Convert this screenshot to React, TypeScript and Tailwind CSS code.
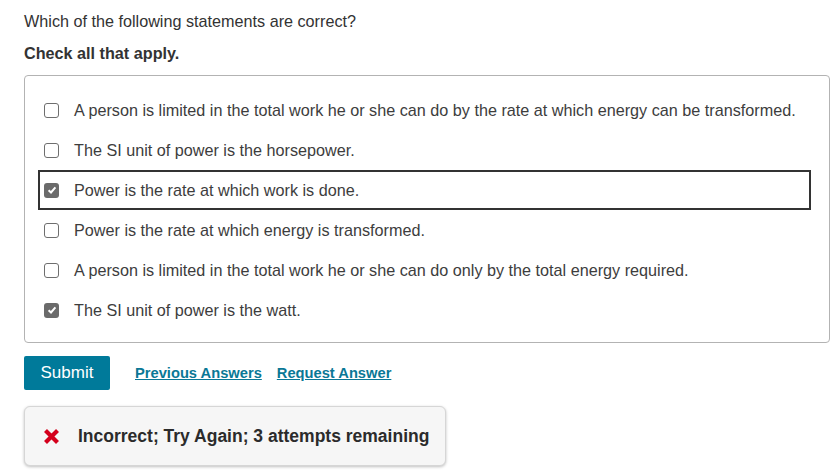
import React from "react";

const options = [
  { text: "A person is limited in the total work he or she can do by the rate at which energy can be transformed.", checked: false },
  { text: "The SI unit of power is the horsepower.", checked: false },
  { text: "Power is the rate at which work is done.", checked: true, focused: true },
  { text: "Power is the rate at which energy is transformed.", checked: false },
  { text: "A person is limited in the total work he or she can do only by the total energy required.", checked: false },
  { text: "The SI unit of power is the watt.", checked: true },
];

const Box: React.FC<{ checked: boolean }> = ({ checked }) =>
  checked ? (
    <span className="flex h-[15px] w-[15px] shrink-0 items-center justify-center rounded-[3px] bg-[#6b6b6b]">
      <svg width="10" height="10" viewBox="0 0 10 10">
        <path d="M1.6 5.2 L4 7.5 L8.4 2.4" fill="none" stroke="#fff" strokeWidth="2" />
      </svg>
    </span>
  ) : (
    <span className="h-[15px] w-[15px] shrink-0 rounded-[3px] border border-[#6e6e6e] bg-white" />
  );

export default function App() {
  return (
    <div className="min-h-[475px] bg-white px-6 pt-[11px] font-['Liberation_Sans',Arial,sans-serif] text-[#333]">
      <p className="text-[16.2px] leading-[20px]">Which of the following statements are correct?</p>
      <p className="mt-[12px] text-[16.2px] font-bold leading-[20px]">Check all that apply.</p>

      {/* answer choices */}
      <div className="mt-[12px] w-[806px] rounded-[4px] border border-[#b3b3b3] pb-[12px] pl-[13px] pr-[18px] pt-[14px]">
        {options.map((o) => (
          <div
            key={o.text}
            className={
              "flex h-[40px] items-center gap-[15px] border-2 pl-[4px] text-[16.2px] text-[#3d3d3d] " +
              (o.focused ? "border-[#333]" : "border-transparent")
            }
          >
            <Box checked={o.checked} />
            <span>{o.text}</span>
          </div>
        ))}
      </div>

      {/* actions */}
      <div className="mt-[13px] flex items-center">
        <button className="h-[34px] w-[86px] rounded-[2px] bg-[#007a9a] text-[17px] text-white">Submit</button>
        <a className="ml-[25px] text-[14.7px] font-bold text-[#0a7896] underline">Previous Answers</a>
        <a className="ml-[15px] text-[14.7px] font-bold text-[#0a7896] underline">Request Answer</a>
      </div>

      {/* feedback */}
      <div className="mt-[16px] flex h-[60px] w-[422px] items-center rounded-[6px] border border-[#d6d6d6] bg-[#f6f6f6] pl-[18px] shadow-[0_1px_3px_rgba(0,0,0,0.25)]">
        <svg width="17" height="17" viewBox="0 0 17 17">
          <path d="M2.5 2.5 L14.5 14.5 M14.5 2.5 L2.5 14.5" stroke="#d4001c" strokeWidth="4.2" />
        </svg>
        <span className="ml-[18px] text-[17.5px] font-bold text-[#2b2b2b]">Incorrect; Try Again; 3 attempts remaining</span>
      </div>
    </div>
  );
}
